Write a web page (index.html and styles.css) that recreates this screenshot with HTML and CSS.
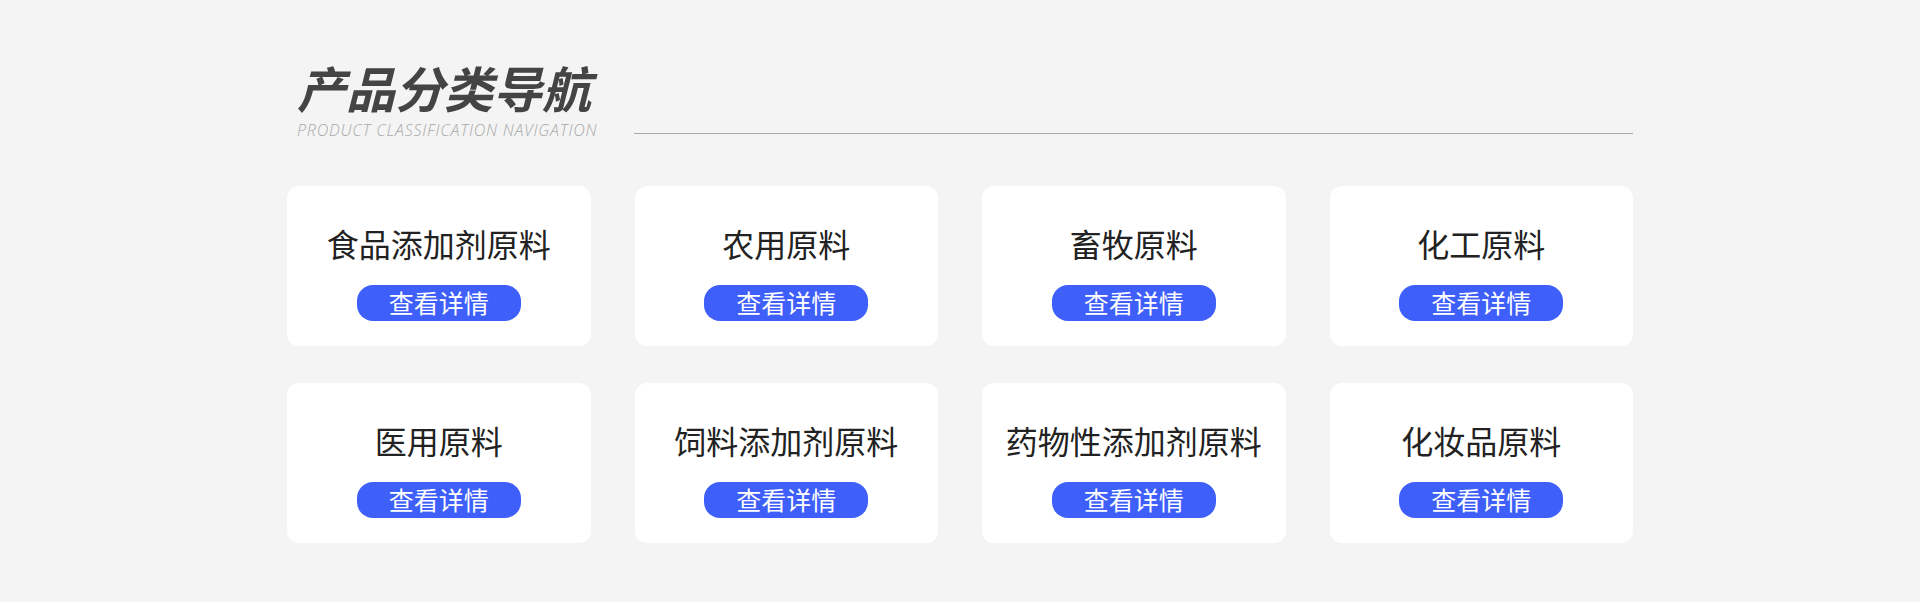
FILE: index.html
```html
<!DOCTYPE html>
<html lang="zh-CN">
<head>
<meta charset="utf-8">
<title>产品分类导航</title>
<link rel="stylesheet" href="styles.css">
</head>
<body>
<section class="nav-section">
  <header class="section-head">
    <div class="head-text">
      <h2 class="head-title">产品分类导航</h2>
      <p class="head-sub">PRODUCT CLASSIFICATION NAVIGATION</p>
    </div>
    <div class="head-line"></div>
  </header>
  <div class="cards">
    <div class="card"><h3 class="card-title">食品添加剂原料</h3><a class="card-btn">查看详情</a></div>
    <div class="card"><h3 class="card-title">农用原料</h3><a class="card-btn">查看详情</a></div>
    <div class="card"><h3 class="card-title">畜牧原料</h3><a class="card-btn">查看详情</a></div>
    <div class="card"><h3 class="card-title">化工原料</h3><a class="card-btn">查看详情</a></div>
    <div class="card"><h3 class="card-title">医用原料</h3><a class="card-btn">查看详情</a></div>
    <div class="card"><h3 class="card-title">饲料添加剂原料</h3><a class="card-btn">查看详情</a></div>
    <div class="card"><h3 class="card-title">药物性添加剂原料</h3><a class="card-btn">查看详情</a></div>
    <div class="card"><h3 class="card-title">化妆品原料</h3><a class="card-btn">查看详情</a></div>
  </div>
</section>
</body>
</html>
```

FILE: styles.css
```css
html, body {
  margin: 0;
  padding: 0;
}
body {
  background: #f4f4f4;
  font-family: "Noto Sans CJK SC", "Noto Sans", sans-serif;
  width: 1920px;
  height: 602px;
  overflow: hidden;
}
.nav-section {
  width: 1346px;
  margin: 0 auto;
  padding-top: 54px;
}
.section-head {
  display: flex;
  align-items: flex-end;
  padding-left: 10px;
}
.head-text {
  display: flex;
  flex-direction: column;
}
.head-title {
  margin: 0;
  font-size: 49px;
  line-height: 66px;
  font-weight: 700;
  font-style: italic;
  color: #444444;
  letter-spacing: 0;
}
.head-sub {
  margin: 0;
  font-family: "Open Sans", "Noto Sans", sans-serif;
  font-size: 16px;
  line-height: 20px;
  font-weight: 300;
  font-style: italic;
  color: #a8a8a8;
  letter-spacing: 0.8px;
  white-space: nowrap;
}
.head-line {
  flex: 1;
  height: 1px;
  background: #a9a9a9;
  margin-left: 37px;
  margin-bottom: 6px;
}
.cards {
  display: grid;
  grid-template-columns: repeat(4, 1fr);
  column-gap: 44px;
  row-gap: 37px;
  margin-top: 46px;
}
.card {
  background: #ffffff;
  border-radius: 12px;
  height: 160px;
  box-sizing: border-box;
  padding-top: 37px;
  display: flex;
  flex-direction: column;
  align-items: center;
}
.card-title {
  margin: 0;
  font-size: 32px;
  line-height: 40px;
  font-weight: 400;
  color: #222222;
}
.card-btn {
  margin-top: 22px;
  width: 164px;
  height: 36px;
  border-radius: 16px;
  background: #3f5ffb;
  color: #ffffff;
  font-size: 25px;
  line-height: 35px;
  text-align: center;
  text-decoration: none;
}
```
